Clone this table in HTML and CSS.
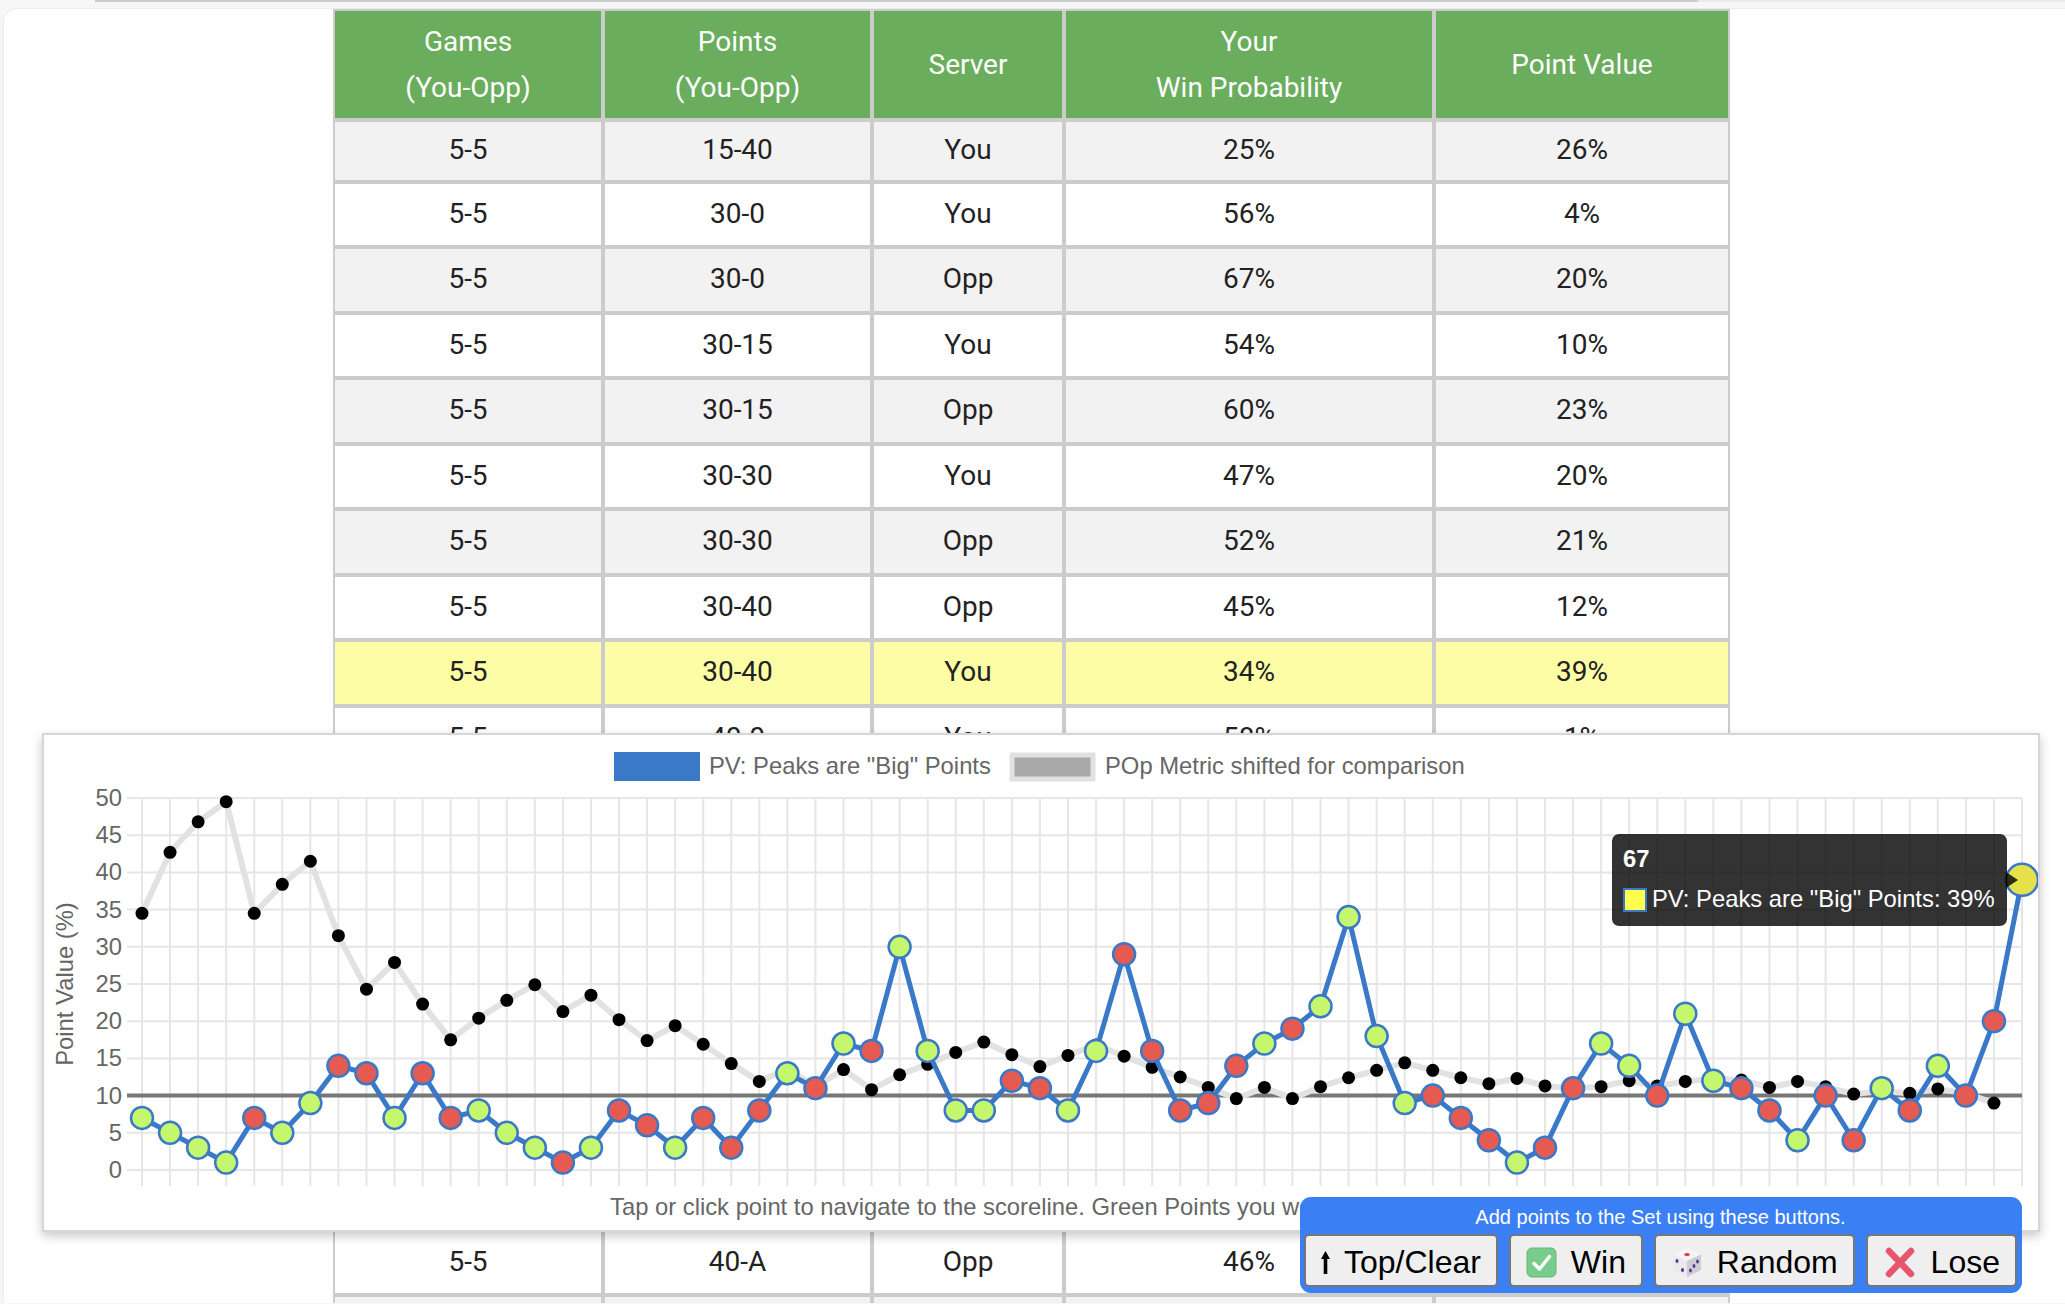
FILE: index.html
```html
<!DOCTYPE html>
<html lang="en">
<head>
<meta charset="utf-8">
<title>Set Point Values</title>
<link rel="stylesheet" href="styles.css">
</head>
<body>
<div class="topline"></div>
<main class="sheet">
  <table class="scores">
    <thead>
      <tr>
        <th class="c-games">Games<br>(You-Opp)</th>
        <th class="c-points">Points<br>(You-Opp)</th>
        <th class="c-server">Server</th>
        <th class="c-prob">Your<br>Win Probability</th>
        <th class="c-value">Point Value</th>
      </tr>
    </thead>
    <tbody>
      <tr><td>5-5</td><td>15-40</td><td>You</td><td>25%</td><td>26%</td></tr>
      <tr><td>5-5</td><td>30-0</td><td>You</td><td>56%</td><td>4%</td></tr>
      <tr><td>5-5</td><td>30-0</td><td>Opp</td><td>67%</td><td>20%</td></tr>
      <tr><td>5-5</td><td>30-15</td><td>You</td><td>54%</td><td>10%</td></tr>
      <tr><td>5-5</td><td>30-15</td><td>Opp</td><td>60%</td><td>23%</td></tr>
      <tr><td>5-5</td><td>30-30</td><td>You</td><td>47%</td><td>20%</td></tr>
      <tr><td>5-5</td><td>30-30</td><td>Opp</td><td>52%</td><td>21%</td></tr>
      <tr><td>5-5</td><td>30-40</td><td>Opp</td><td>45%</td><td>12%</td></tr>
      <tr class="current"><td>5-5</td><td>30-40</td><td>You</td><td>34%</td><td>39%</td></tr>
      <tr><td>5-5</td><td>40-0</td><td>You</td><td>58%</td><td>1%</td></tr>
      <tr><td>5-5</td><td>40-0</td><td>Opp</td><td>72%</td><td>9%</td></tr>
      <tr><td>5-5</td><td>40-15</td><td>You</td><td>57%</td><td>3%</td></tr>
      <tr><td>5-5</td><td>40-15</td><td>Opp</td><td>66%</td><td>17%</td></tr>
      <tr><td>5-5</td><td>40-30</td><td>You</td><td>55%</td><td>8%</td></tr>
      <tr><td>5-5</td><td>40-30</td><td>Opp</td><td>60%</td><td>25%</td></tr>
      <tr><td>5-5</td><td>40-40</td><td>You</td><td>51%</td><td>16%</td></tr>
      <tr><td>5-5</td><td>40-40</td><td>Opp</td><td>55%</td><td>32%</td></tr>
      <tr><td>5-5</td><td>40-A</td><td>Opp</td><td>46%</td><td>30%</td></tr>
      <tr><td>5-5</td><td>A-40</td><td>You</td><td>57%</td><td>12%</td></tr>
    </tbody>
  </table>
</main>

<section class="chart-card">
  <svg class="chart" width="1994" height="495" viewBox="44 735 1994 495" xmlns="http://www.w3.org/2000/svg">
    <g id="grid" class="grid"></g>
    <g class="legend">
      <rect class="legend-pv" x="614" y="752" width="86" height="29"></rect>
      <text class="chart-text" x="709" y="774">PV: Peaks are "Big" Points</text>
      <rect class="legend-pop" x="1012" y="755" width="81" height="24"></rect>
      <text class="chart-text" x="1105" y="774">POp Metric shifted for comparison</text>
    </g>
    <g class="ticks">
      <text class="chart-text tick" x="122" y="806">50</text>
      <text class="chart-text tick" x="122" y="843.2">45</text>
      <text class="chart-text tick" x="122" y="880.4">40</text>
      <text class="chart-text tick" x="122" y="917.6">35</text>
      <text class="chart-text tick" x="122" y="954.8">30</text>
      <text class="chart-text tick" x="122" y="992">25</text>
      <text class="chart-text tick" x="122" y="1029.2">20</text>
      <text class="chart-text tick" x="122" y="1066.4">15</text>
      <text class="chart-text tick" x="122" y="1103.6">10</text>
      <text class="chart-text tick" x="122" y="1140.8">5</text>
      <text class="chart-text tick" x="122" y="1178">0</text>
    </g>
    <text class="chart-text axis-title" transform="translate(73 984) rotate(-90)">Point Value (%)</text>
    <g id="series"></g>
    <text class="chart-text" x="610" y="1215">Tap or click point to navigate to the scoreline. Green Points you won, Red Points you lost.</text>
    <g class="tooltip">
      <rect class="tip-box" x="1612" y="834" width="395" height="92" rx="7" ry="7"></rect>
      <polygon class="tip-box" points="2006,872 2018,880 2006,888"></polygon>
      <text class="tip-title" x="1623" y="867">67</text>
      <rect class="tip-swatch" x="1624" y="889" width="22" height="22"></rect>
      <text class="tip-body" x="1652" y="907">PV: Peaks are "Big" Points: 39%</text>
    </g>
  </svg>
</section>

<div class="add-panel">
  <div class="add-title">Add points to the Set using these buttons.</div>
  <div class="add-buttons">
    <button class="add-btn" type="button">
      <svg class="ico ico-up" width="9" height="23" viewBox="0 0 9 23"><polygon points="4.5,0 9,8 6.3,8 6.3,23 2.7,23 2.7,8 0,8"></polygon></svg>
      <span>Top/Clear</span>
    </button>
    <button class="add-btn" type="button">
      <svg class="ico" width="31" height="31" viewBox="0 0 31 31">
        <rect class="chk-bg" x="1" y="1" width="29" height="29" rx="5" ry="5"></rect>
        <path class="chk-mark" d="M8 16.5 L13.5 22 L23.5 9.5"></path>
      </svg>
      <span>Win</span>
    </button>
    <button class="add-btn" type="button">
      <svg class="ico" width="32" height="31" viewBox="0 0 32 31">
        <polygon class="die-top" points="16,1 30,7.5 16,14 2,7.5"></polygon>
        <polygon class="die-left" points="2,7.5 16,14 16,30 2,23"></polygon>
        <polygon class="die-right" points="16,14 30,7.5 30,23 16,30"></polygon>
        <ellipse class="die-red" cx="16" cy="7.5" rx="2.8" ry="1.6"></ellipse>
        <ellipse class="die-pip" cx="6" cy="14" rx="1.5" ry="2.1"></ellipse>
        <ellipse class="die-pip" cx="11.5" cy="23" rx="1.5" ry="2.1"></ellipse>
        <ellipse class="die-pip" cx="19.5" cy="23.5" rx="1.4" ry="2.1"></ellipse>
        <ellipse class="die-pip" cx="23" cy="19" rx="1.4" ry="2.1"></ellipse>
        <ellipse class="die-pip" cx="26.5" cy="14.5" rx="1.4" ry="2.1"></ellipse>
      </svg>
      <span>Random</span>
    </button>
    <button class="add-btn" type="button">
      <svg class="ico" width="34" height="33" viewBox="0 0 34 33">
        <path class="x-mark" d="M6 5 L28 28 M28 5 L6 28"></path>
      </svg>
      <span>Lose</span>
    </button>
  </div>
</div>

<script src="plot.js"></script>
</body>
</html>
```

FILE: styles.css
```css
html, body {
  margin: 0;
  padding: 0;
  overflow: hidden;
  background: #f6f6f6;
}

body {
  position: relative;
  width: 2065px;
  height: 1304px;
  font-family: "Liberation Sans", Arial, sans-serif;
}

.topline {
  height: 2px;
  margin-left: 95px;
  background: linear-gradient(to right, #cccccc 0, #cccccc 1603px, #e9e9e9 1603px);
}

.sheet {
  margin: 6px 0 0 3px;
  height: 1295px;
  overflow: hidden;
  box-sizing: border-box;
  padding-left: 329px;
  background: #ffffff;
  border-top: 1px solid #ececec;
  border-left: 1px solid #ececec;
  border-top-left-radius: 14px;
}

.scores {
  width: 1397px;
  table-layout: fixed;
  border-collapse: separate;
  border-spacing: 0;
  font-family: Roboto, "Noto Sans", sans-serif;
  font-size: 28px;
  line-height: 45.5px;
  color: #222222;
  text-align: center;
}

.scores th,
.scores td {
  box-sizing: border-box;
  border: 2px solid #cccccc;
}

.scores th {
  padding: 8px 0;
  background: #69ad5d;
  color: #ffffff;
  font-weight: 400;
}

.scores td {
  padding: 7px 0 9px;
}

.scores tbody tr:first-child td {
  padding: 5px 0 7px;
}

.c-games { width: 270px; }
.c-points { width: 269px; }
.c-server { width: 192px; }
.c-prob { width: 370px; }
.c-value { width: 296px; }

.scores tbody tr:nth-child(odd) td { background: #f2f2f2; }
.scores tbody tr:nth-child(even) td { background: #ffffff; }
.scores tbody tr.current td { background: #fdfda6; }

/* chart card */
.chart-card {
  position: absolute;
  left: 42px;
  top: 733px;
  width: 1998px;
  height: 499px;
  box-sizing: border-box;
  border: 2px solid #d6d6d6;
  background: #ffffff;
  box-shadow: 0 4px 10px rgba(0, 0, 0, 0.22);
}

.chart { display: block; }

.chart-text {
  font-family: "Liberation Sans", Arial, sans-serif;
  font-size: 23.8px;
  fill: #666666;
}

.tick { text-anchor: end; }
.axis-title { text-anchor: middle; }

.legend-pv { fill: #3a78c8; }
.legend-pop { fill: #a9a9a9; stroke: #e1e1e1; stroke-width: 5; }

.grid line { stroke: #e6e6e6; stroke-width: 2; }

.refline { stroke: #777777; stroke-width: 4; }
.pop-line { fill: none; stroke: #e2e2e2; stroke-width: 6; stroke-linejoin: round; }
.pop-dot { fill: #000000; }
.pv-line { fill: none; stroke: #3a78c8; stroke-width: 5; stroke-linejoin: round; }
.pv-dot { stroke: #3a78c8; stroke-width: 2.5; }
.pv-dot.won { fill: #c5f76e; }
.pv-dot.lost { fill: #e55b51; }
.pv-dot.current { fill: #e6e04b; }

.tip-box { fill: rgba(0, 0, 0, 0.8); }
.tip-title {
  font-family: "Liberation Sans", Arial, sans-serif;
  font-size: 23.8px;
  font-weight: 700;
  fill: #ffffff;
}
.tip-body {
  font-family: "Liberation Sans", Arial, sans-serif;
  font-size: 23.8px;
  fill: #ffffff;
}
.tip-swatch { fill: #ffff4f; stroke: #3a78c8; stroke-width: 2; }

/* add points panel */
.add-panel {
  position: absolute;
  left: 1300px;
  top: 1197px;
  width: 722px;
  height: 96px;
  box-sizing: border-box;
  padding: 4px 5px 6px 4px;
  background: #3b7ff5;
  border-radius: 11px;
}

.add-title {
  height: 33px;
  line-height: 33px;
  text-align: center;
  color: #ffffff;
  font-size: 20px;
}

.add-buttons {
  display: flex;
  justify-content: space-between;
}

.add-btn {
  display: inline-flex;
  align-items: center;
  gap: 14px;
  height: 53px;
  box-sizing: border-box;
  padding: 3px 15px 0;
  margin: 0;
  border: 2px solid #767676;
  border-radius: 5px;
  background: #efefef;
  color: #000000;
  font-family: "Liberation Sans", Arial, sans-serif;
  font-size: 32px;
}

.ico { display: block; flex: none; }
.ico-up polygon { fill: #000000; }

.chk-bg { fill: #79cc8c; stroke: #62b877; stroke-width: 1; }
.chk-mark { fill: none; stroke: #ffffff; stroke-width: 3.5; stroke-linecap: round; stroke-linejoin: round; }

.die-top { fill: #f6f4f7; }
.die-left { fill: #ebe8ee; }
.die-right { fill: #cfcad6; }
.die-red { fill: #e3343f; }
.die-pip { fill: #4b3d86; }

.x-mark { fill: none; stroke: #e8566d; stroke-width: 6.5; stroke-linecap: round; }
```

FILE: plot.js
```js
(function () {
  var NS = 'http://www.w3.org/2000/svg';

  var pv = [7, 5, 3, 1, 7, 5, 9, 14, 13, 7,
            13, 7, 8, 5, 3, 1, 3, 8, 6, 3,
            7, 3, 8, 13, 11, 17, 16, 30, 16, 8,
            8, 12, 11, 8, 16, 29, 16, 8, 9, 14,
            17, 19, 22, 34, 18, 9, 10, 7, 4, 1,
            3, 11, 17, 14, 10, 21, 12, 11, 8, 4,
            10, 4, 11, 8, 14, 10, 20, 39];

  var outcome = 'GGGGRGGRRGRRGGGRGRRGRRRGRGRGGGGRRGGRRRRRGRGGGGRRRGRRGGRGGRRGRRGRGRRY';

  var pop = [34.5, 42.7, 46.8, 49.5, 34.5, 38.4, 41.5, 31.5, 24.3, 27.9,
             22.3, 17.5, 20.4, 22.8, 24.9, 21.3, 23.5, 20.2, 17.4, 19.4,
             16.9, 14.3, 11.9, 13.6, 11.2, 13.5, 10.8, 12.8, 14.2, 15.8,
             17.2, 15.5, 13.9, 15.4, 16.8, 15.3, 13.8, 12.5, 11.1, 9.6,
             11.1, 9.6, 11.2, 12.4, 13.4, 14.4, 13.4, 12.4, 11.6, 12.3,
             11.3, 11.0, 11.2, 12.0, 11.3, 11.9, 12.3, 12.1, 11.1, 11.9,
             11.2, 10.2, 10.6, 10.3, 10.9, 10.3, 9.0];

  var X0 = 142, DX = 28.06, Y0 = 1170, DY = 7.44;

  function px(i) { return (X0 + i * DX).toFixed(2); }
  function py(v) { return (Y0 - v * DY).toFixed(2); }

  function make(tag, attrs, parent) {
    var e = document.createElementNS(NS, tag);
    for (var k in attrs) { e.setAttribute(k, attrs[k]); }
    parent.appendChild(e);
    return e;
  }

  var grid = document.getElementById('grid');
  var v, i;
  for (v = 0; v <= 50; v += 5) {
    make('line', { x1: 127, x2: 2022, y1: py(v), y2: py(v) }, grid);
  }
  for (i = 0; i < pv.length; i++) {
    make('line', { x1: px(i), x2: px(i), y1: 798, y2: 1186 }, grid);
  }

  var s = document.getElementById('series');
  make('line', { 'class': 'refline', x1: 127, x2: 2022, y1: py(10), y2: py(10) }, s);

  make('polyline', {
    'class': 'pop-line',
    points: pop.map(function (val, idx) { return px(idx) + ',' + py(val); }).join(' ')
  }, s);
  pop.forEach(function (val, idx) {
    make('circle', { 'class': 'pop-dot', cx: px(idx), cy: py(val), r: 6.5 }, s);
  });

  make('polyline', {
    'class': 'pv-line',
    points: pv.map(function (val, idx) { return px(idx) + ',' + py(val); }).join(' ')
  }, s);
  pv.forEach(function (val, idx) {
    var c = outcome.charAt(idx);
    var cls = c === 'G' ? 'won' : (c === 'R' ? 'lost' : 'current');
    make('circle', {
      'class': 'pv-dot ' + cls,
      cx: px(idx),
      cy: py(val),
      r: c === 'Y' ? 16 : 11
    }, s);
  });
})();
```
